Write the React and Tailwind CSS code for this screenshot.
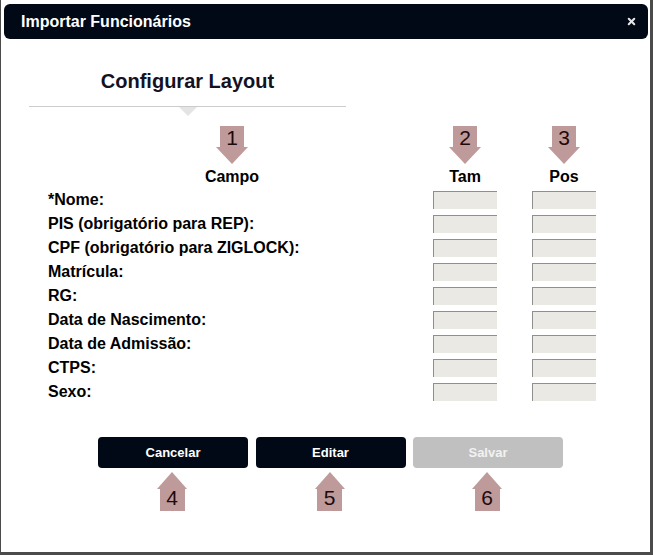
import { X } from 'lucide-react';

const fields = [
  '*Nome:',
  'PIS (obrigatório para REP):',
  'CPF (obrigatório para ZIGLOCK):',
  'Matrícula:',
  'RG:',
  'Data de Nascimento:',
  'Data de Admissão:',
  'CTPS:',
  'Sexo:',
];

// Pink annotation arrow pointing down (digit in the shaft)
const DownArrow = ({ n }) => (
  <div className="flex flex-col items-center">
    <div className="w-[24px] h-[21px] bg-[#bf9a9b] flex justify-center text-[21px] leading-[24px] text-[#1e0a0a]">
      {n}
    </div>
    <div className="w-0 h-0 border-l-[16px] border-r-[16px] border-t-[17px] border-l-transparent border-r-transparent border-t-[#bf9a9b]" />
  </div>
);

// Pink annotation arrow pointing up
const UpArrow = ({ n }) => (
  <div className="flex flex-col items-center">
    <div className="w-0 h-0 border-l-[15px] border-r-[15px] border-b-[17px] border-l-transparent border-r-transparent border-b-[#bf9a9b]" />
    <div className="w-[25px] h-[22px] bg-[#bf9a9b] flex justify-center text-[21px] leading-[18px] text-[#1e0a0a]">
      {n}
    </div>
  </div>
);

const Field = () => (
  <div className="w-[64px] h-[18px] bg-[#ebe9e3] border-t border-l border-[#8f8f8f]" />
);

const App = () => {
  return (
    <div
      className="w-[653px] h-[555px] bg-white border-l border-r-[3px] border-b-[3px] border-[#4b4b4b] pt-[4px] overflow-hidden"
      style={{ fontFamily: '"Liberation Sans", Arial, sans-serif' }}
    >
      <div className="mx-[3px] mr-[2px] h-[35px] rounded-[6px] bg-[#010816] flex items-center justify-between pl-[17px] pr-[11px]">
        <span className="text-white font-bold text-[16px]">Importar Funcionários</span>
        <X className="w-[11px] h-[11px] text-[#e6e6e6]" strokeWidth={4.5} />
      </div>

      <div className="w-[317px] ml-[28px] mt-[31px] flex flex-col items-center">
        <h1 className="text-[20px] leading-[23px] font-bold text-[#121222]">Configurar Layout</h1>
        <div className="w-full h-px bg-[#cccccc] mt-[13px]" />
        <div className="w-0 h-0 border-l-[9px] border-r-[9px] border-t-[9px] border-l-transparent border-r-transparent border-t-[#e4e4e4]" />
      </div>

      <div className="pl-[47px] mt-[10px]">
        <div className="grid grid-cols-[350px_64px_64px] gap-x-[35px] items-end">
          <div className="w-[368px] flex flex-col items-center">
            <DownArrow n="1" />
            <span className="font-bold text-[16px] leading-[23px] mt-px text-black">Campo</span>
          </div>
          <div className="flex flex-col items-center">
            <DownArrow n="2" />
            <span className="font-bold text-[16px] leading-[23px] mt-px text-black">Tam</span>
          </div>
          <div className="flex flex-col items-center">
            <DownArrow n="3" />
            <span className="font-bold text-[16px] leading-[23px] mt-px text-black">Pos</span>
          </div>
        </div>

        {fields.map((f) => (
          <div key={f} className="grid grid-cols-[350px_64px_64px] gap-x-[35px] h-[24px] items-center">
            <span className="font-bold text-[16px] leading-[20px] text-black whitespace-nowrap">{f}</span>
            <Field />
            <Field />
          </div>
        ))}
      </div>

      <div className="flex ml-[97px] mt-[33px] gap-[7.5px]">
        {[
          { label: 'Cancelar', n: '4', dark: true },
          { label: 'Editar', n: '5', dark: true },
          { label: 'Salvar', n: '6', dark: false },
        ].map((b) => (
          <div key={b.label} className="w-[150px] flex flex-col items-center">
            <button
              className={`w-full h-[31px] rounded-[4px] font-bold text-[13px] ${
                b.dark ? 'bg-[#010816] text-white' : 'bg-[#c0c0c0] text-[#f2f2f2]'
              }`}
            >
              {b.label}
            </button>
            <div className="mt-[4px] -ml-[2px]">
              <UpArrow n={b.n} />
            </div>
          </div>
        ))}
      </div>
    </div>
  );
};

export default App;
